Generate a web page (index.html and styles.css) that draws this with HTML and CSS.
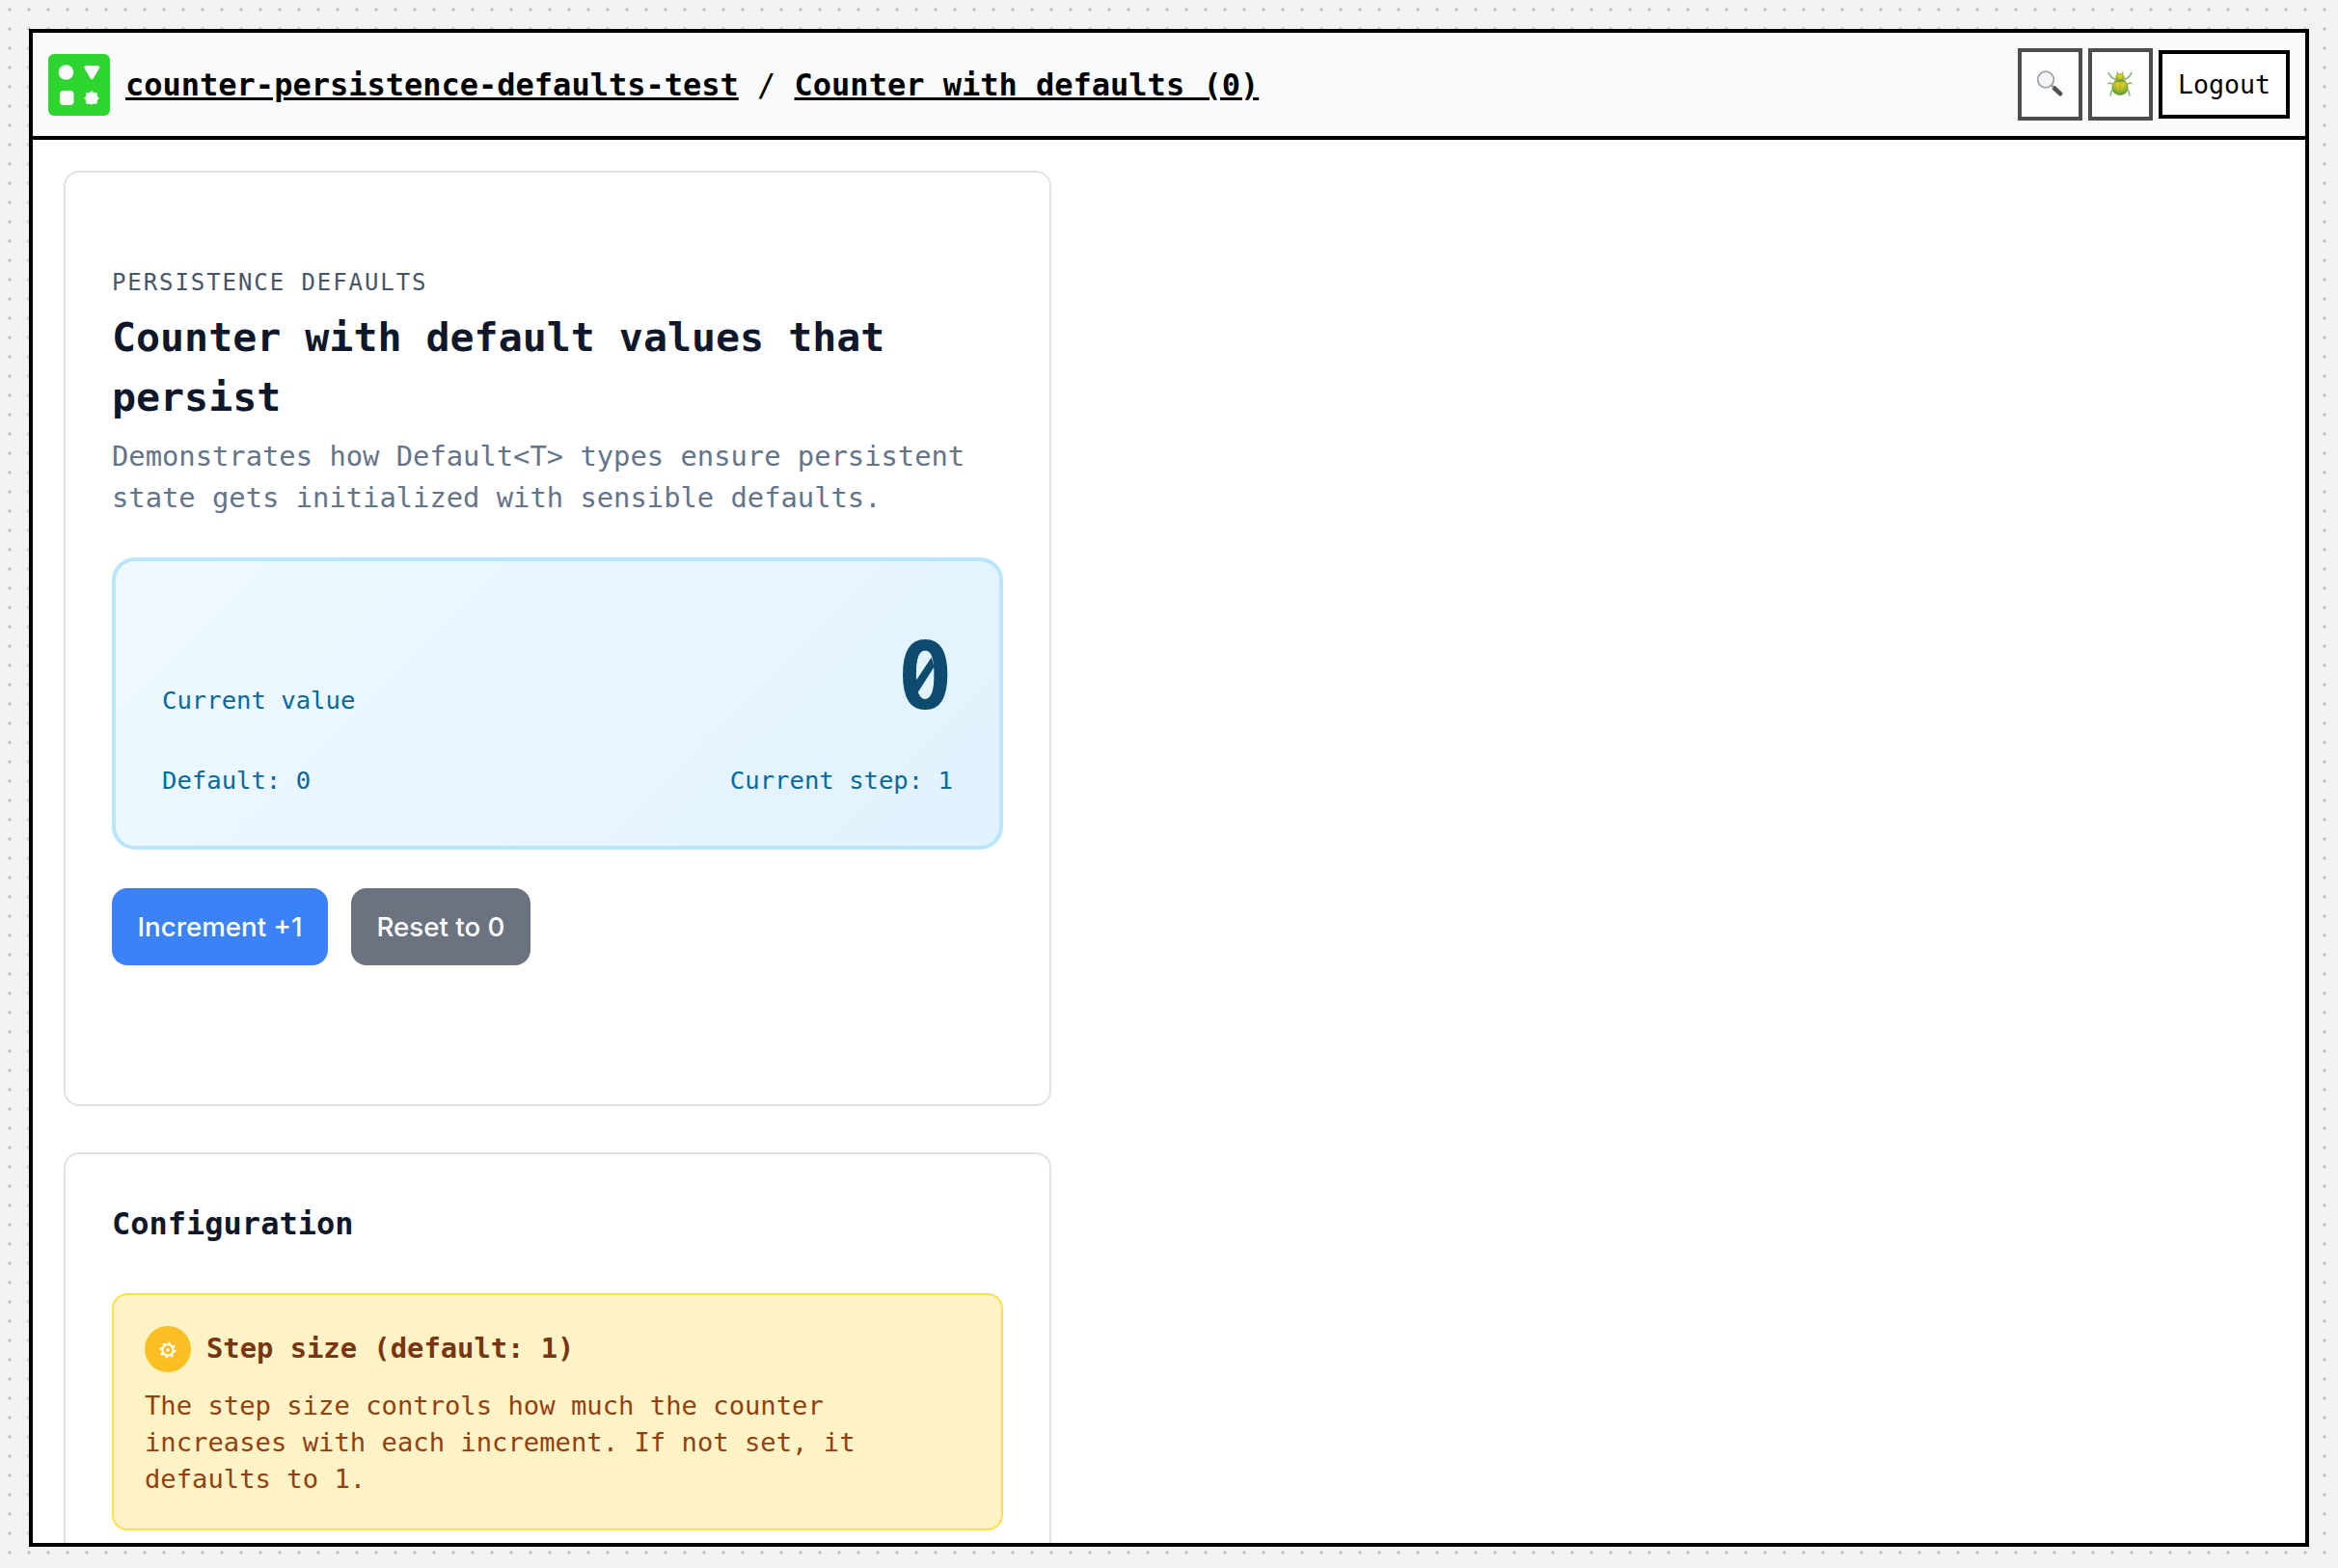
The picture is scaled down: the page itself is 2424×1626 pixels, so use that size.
FILE: index.html
```html
<!DOCTYPE html>
<html lang="en">
<head>
<meta charset="utf-8">
<title>Counter with defaults (0)</title>
<link rel="stylesheet" href="styles.css">
</head>
<body>
<div class="frame">
  <header class="topbar">
    <svg class="logo" viewBox="0 0 64 64" aria-hidden="true">
      <rect width="64" height="64" rx="6" fill="#2ed52e"/>
      <g fill="#f9fafc">
        <circle cx="18.500" cy="19" r="7.800"/>
        <path d="M39 12h12.500a1.800 1.800 0 0 1 1.500 2.700L46.600 25.600a1.600 1.600 0 0 1-2.800 0L37.500 14.700A1.800 1.800 0 0 1 39 12z"/>
        <rect x="12" y="38" width="14.500" height="15" rx="4"/>
        <path d="M45 38.300l2.100 2.400 3.200-.3.100 3.200 2 2.300-2 2.200-.1 3.200-3.200-.1L45 52.200l-2.100-1-3.200.1-.1-3.200-2-2.200 2-2.300.1-3.200 3.200.3z" stroke="#f9fafc" stroke-width=".8" stroke-linejoin="round"/>
      </g>
    </svg>
    <nav class="crumbs"><a class="crumb">counter-persistence-defaults-test</a> / <a class="crumb">Counter with defaults (0)</a></nav>
    <div class="actions">
      <button class="tool" aria-label="Search">
        <svg class="tool-icon" viewBox="0 0 28 28">
          <path d="M19 18.500l6 5.700" stroke="#4f5054" stroke-width="4.600" stroke-linecap="round"/>
          <path d="M15.500 15l3 3" stroke="#85878a" stroke-width="2"/>
          <circle cx="10" cy="9.500" r="8.300" fill="#f4f5f7" stroke="#a0a4aa" stroke-width="1.800"/>
        </svg>
      </button>
      <button class="tool" aria-label="Debug">
        <svg class="tool-icon" viewBox="0 0 28 28">
          <defs>
            <radialGradient id="shell" cx=".5" cy=".3" r=".6">
              <stop offset="0" stop-color="#f2cf1c"/>
              <stop offset=".5" stop-color="#b9c32b"/>
              <stop offset="1" stop-color="#67a136"/>
            </radialGradient>
          </defs>
          <path d="M9 9.500L5 7 2 2.500M19 9.500L23 7l3-4.500M7 14.500l-3-1.500-2 .5M21 14.500l3-1.500 2 .5M7 19.500l-2 2.500L4 26M21 19.500l2 2.500 1 4M12 4l-1-2M16 4l1-2" fill="none" stroke="#8bb07c" stroke-width="1.500" stroke-linecap="round" stroke-linejoin="round"/>
          <ellipse cx="14" cy="17.500" rx="8.600" ry="8.400" fill="url(#shell)"/>
          <ellipse cx="14" cy="7.500" rx="4.800" ry="4.600" fill="url(#shell)"/>
          <path d="M14 12v13.500" stroke="#a5962c" stroke-width=".8"/>
          <path d="M8 11.500q6-1.500 12 0" stroke="#7e9430" stroke-width="1" fill="none"/>
        </svg>
      </button>
      <button class="logout">Logout</button>
    </div>
  </header>
  <main class="content">
    <section class="card">
      <div class="card-main">
        <div class="intro">
          <span class="eyebrow">PERSISTENCE DEFAULTS</span>
          <h2 class="title">Counter with default values that persist</h2>
          <p class="lede">Demonstrates how Default&lt;T&gt; types ensure persistent state gets initialized with sensible defaults.</p>
        </div>
        <div class="value-box">
          <div class="row">
            <span>Current value</span>
            <strong class="value">0<svg class="zero-slash" viewBox="0 0 20 50" aria-hidden="true"><path d="M10 0C16 0 19 9 19 25s-3 25-9 25S1 41 1 25 4 0 10 0z" fill="#e3f3fd"/><path d="M16.800 6.500L.5 31v13l2.500-1.500L19.500 16.500z" fill="#0c4a6e"/></svg></strong>
          </div>
          <div class="row"><span>Default: 0</span><span>Current step: 1</span></div>
        </div>
        <div class="buttons">
          <button class="btn btn-primary">Increment +1</button>
          <button class="btn btn-muted">Reset to 0</button>
        </div>
      </div>
    </section>
    <section class="card card-config">
      <h3 class="section-title">Configuration</h3>
      <div class="notice">
        <div class="notice-head">
          <span class="badge">
            <svg class="gear" viewBox="0 0 18 18" fill="none" stroke="#fff"><circle cx="9" cy="9" r="5.700" stroke-width="2"/><circle cx="9" cy="9" r="1.800" fill="#fff" stroke="none"/><circle cx="9" cy="9" r="7.500" stroke-width="2.200" stroke-dasharray="2.500 3.390"/></svg>
          </span>
          <h4 class="notice-title">Step size (default: 1)</h4>
        </div>
        <p class="notice-text">The step size controls how much the counter increases with each increment. If not set, it defaults to 1.</p>
      </div>
    </section>
  </main>
</div>
</body>
</html>
```
FILE: styles.css
```css
* { box-sizing: border-box; }
html, body { height: 100%; overflow: hidden; }
body {
  margin: 0;
  padding: 30px 30px 22px;
  background: #f2f2f2 radial-gradient(circle at 10px 10px, #ccc 2px, transparent 2px) 0 0 / 20px 20px;
  font-family: "DejaVu Sans Mono", monospace;
  line-height: 1.5;
}
h2, h3, h4, p { margin: 0; }
button { margin: 0; font-family: inherit; }
.frame {
  height: 100%;
  display: flex;
  flex-direction: column;
  border: 4px solid #000;
  background: #fff;
  overflow: hidden;
}
.topbar {
  flex: none;
  height: 111px;
  display: flex;
  align-items: center;
  gap: 16px;
  padding: 0 16px;
  border-bottom: 4px solid #000;
  background: #f9fafc;
}
.logo { width: 64px; height: 64px; }
.crumbs { flex: 1; font-size: 32px; white-space: nowrap; }
.crumb { font-weight: 700; text-decoration: underline; text-decoration-thickness: 3px; text-underline-offset: 2px; }
.actions { display: flex; align-items: center; gap: 6px; }
.tool {
  width: 67px;
  height: 75px;
  display: flex;
  align-items: center;
  justify-content: center;
  padding: 0 2px 2px 0;
  border: 4px solid #4d4d4d;
  background: #fdfdfe;
}
.tool-icon { width: 28px; height: 28px; fill: none; }
.logout {
  width: 136px;
  height: 71px;
  padding: 0;
  border: 4px solid #000;
  background: #fff;
  color: #000;
  font-size: 26.6px;
}
.content {
  flex: 1;
  min-height: 0;
  display: flex;
  flex-direction: column;
  gap: 48px;
  padding: 32px;
  overflow: hidden;
}
.card {
  flex: none;
  width: 1024px;
  padding: 48px;
  border: 2px solid #e2e2e2;
  border-radius: 16px;
}
.card-config { padding-bottom: 96px; }
.card-main { display: flex; flex-direction: column; gap: 40px; padding: 48px 0 96px; }
.intro { display: flex; flex-direction: column; gap: 8px; }
.eyebrow { color: #475569; font-size: 24px; letter-spacing: 1.92px; }
.title { color: #0f172a; font-size: 41.6px; }
.lede { color: #64748b; font-size: 28.8px; }
.value-box {
  display: flex;
  flex-direction: column;
  gap: 16px;
  padding: 48px;
  border: 4px solid #bae6fd;
  border-radius: 24px;
  background: linear-gradient(135deg, #f0f9ff, #e0f2fe);
  color: #0369a1;
  font-size: 25.6px;
}
.row { display: flex; align-items: baseline; justify-content: space-between; }
.value { position: relative; color: #0c4a6e; font-size: 96px; }
.zero-slash { position: absolute; left: 19px; top: 45px; width: 20px; height: 50px; }
.buttons { display: flex; gap: 24px; }
.btn {
  height: 80px;
  padding: 0;
  border: 0;
  border-radius: 16px;
  color: #fff;
  font: 500 27.7px Inter, sans-serif;
}
.btn-primary { width: 224px; background: #3b82f6; }
.btn-muted { width: 186px; background: #6b7280; }
.section-title { color: #0f172a; font-size: 32px; margin-bottom: 48px; }
.notice {
  display: flex;
  flex-direction: column;
  gap: 16px;
  padding: 32px;
  border: 2px solid #fde047;
  border-radius: 16px;
  background: #fef3c7;
}
.notice-head { display: flex; align-items: center; gap: 16px; }
.badge {
  width: 48px;
  height: 48px;
  display: flex;
  align-items: center;
  justify-content: center;
  border-radius: 50%;
  background: #fbbf24;
}
.gear { width: 18px; height: 18px; margin-top: 2px; }
.notice-title { color: #78350f; font-size: 28.8px; }
.notice-text { color: #92400e; font-size: 27.2px; line-height: 1.4; }
```
